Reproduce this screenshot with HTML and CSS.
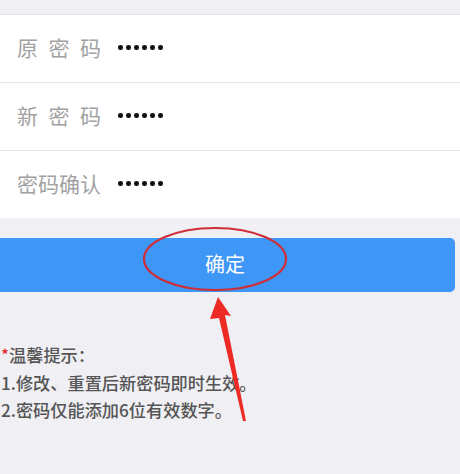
FILE: index.html
```html
<!DOCTYPE html>
<html lang="zh-CN">
<head>
    <meta charset="UTF-8">
    <meta name="viewport" content="width=device-width, initial-scale=1.0">
    <title>修改密码</title>
    <link rel="stylesheet" href="styles.css">
</head>
<body>

<div class="form">
    <div class="row">
        <span class="label spaced">原密码</span>
        <span class="dots"><i></i><i></i><i></i><i></i><i></i><i></i></span>
    </div>
    <div class="row">
        <span class="label spaced">新密码</span>
        <span class="dots"><i></i><i></i><i></i><i></i><i></i><i></i></span>
    </div>
    <div class="row">
        <span class="label">密码确认</span>
        <span class="dots"><i></i><i></i><i></i><i></i><i></i><i></i></span>
    </div>
</div>

<div class="btn">确定</div>

<div class="tips">
    <p><span class="star">*</span>温馨提示：</p>
    <p>1.修改、重置后新密码即时生效。</p>
    <p>2.密码仅能添加6位有效数字。</p>
</div>

<!-- red annotation drawn over the screenshot -->
<svg class="mark" width="460" height="474" viewBox="0 0 460 474">
    <ellipse cx="215" cy="259" rx="71" ry="31" fill="none" stroke="#cf2e36" stroke-width="2.2"/>
    <polygon points="218,297 231,316 225,315 246,421 243,421 219,318 210,319" fill="#ee2a24"/>
</svg>

</body>
</html>
```

FILE: styles.css
```css
body {
    margin: 0;
    width: 460px;
    height: 474px;
    overflow: hidden;
    position: relative;
    background-color: #efeff4;
    font-family: "Noto Sans CJK SC", "Noto Sans", sans-serif;
}
.form {
    margin-top: 14px;
    background-color: #fff;
    border-top: 1px solid #e4e4e8;
}
.row {
    display: flex;
    align-items: center;
    height: 63px;
    padding: 0 0 4px 17px;
    border-bottom: 1px solid #e6e6ea;
}
.row:last-child {
    border-bottom: none;
}
.label {
    width: 84px;
    font-size: 21px;
    color: #a2a2a2;
    white-space: nowrap;
}
.label.spaced {
    letter-spacing: 10.5px;
}
.dots {
    display: flex;
    gap: 3.5px;
    margin-left: 17px;
    padding-top: 2px;
}
.dots i {
    width: 4.5px;
    height: 4.5px;
    border-radius: 50%;
    background-color: #111;
}
.btn {
    margin: 20px 5px 0 -5px;
    height: 54px;
    line-height: 52px;
    border-radius: 5px;
    background-color: #3e96f6;
    color: #fff;
    font-size: 20px;
    text-align: center;
}
.tips {
    margin-top: 49px;
    padding-left: 1px;
    color: #555;
    font-size: 17.2px;
    font-weight: 500;
}
.tips p {
    margin: 0;
    line-height: 27.5px;
}
.star {
    color: #e02020;
    font-weight: normal;
}
.mark {
    position: absolute;
    left: 0;
    top: 0;
}
```
